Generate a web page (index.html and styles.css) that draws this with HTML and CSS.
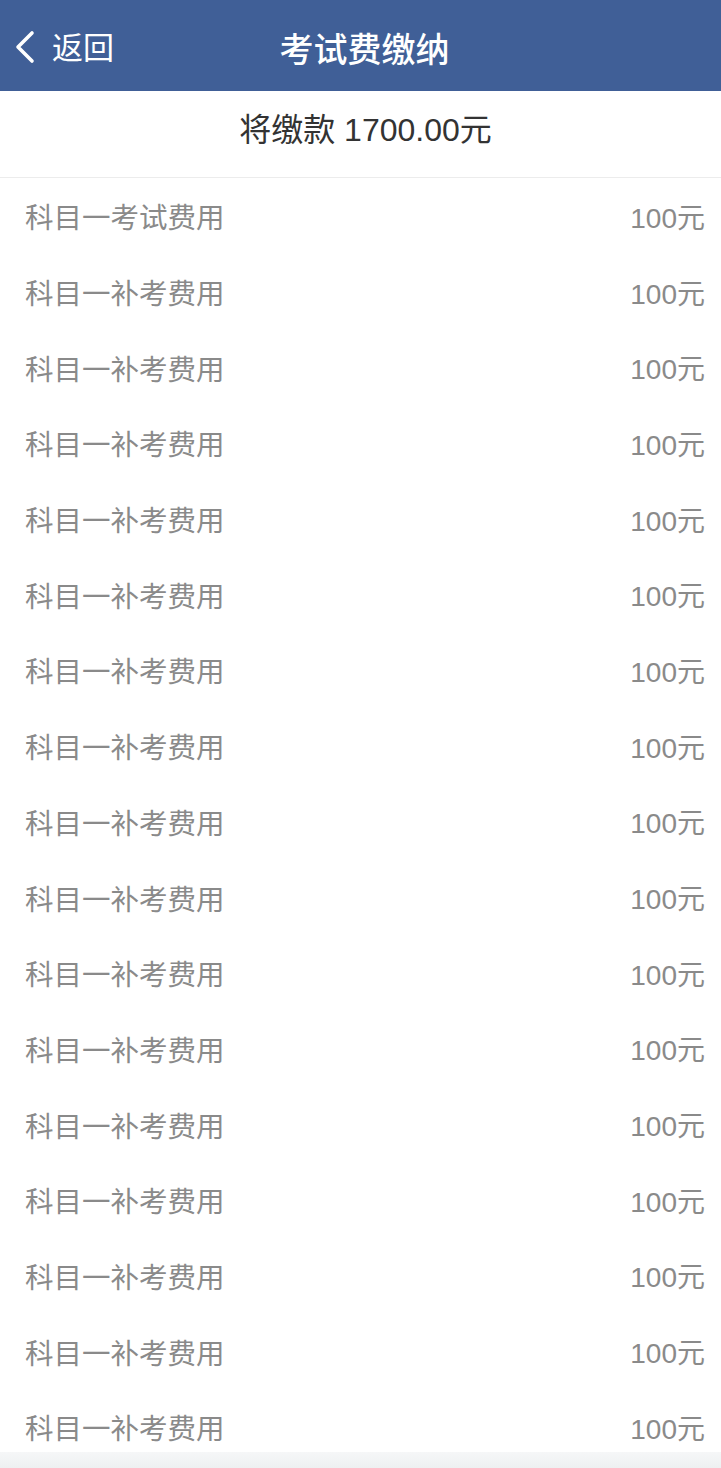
FILE: index.html
```html
<!DOCTYPE html>
<html lang="zh-CN">
<head>
    <meta charset="UTF-8">
    <meta name="viewport" content="width=device-width, initial-scale=1.0">
    <title>考试费缴纳</title>
    <link rel="stylesheet" href="styles.css">
</head>
<body>

    <!-- 顶部导航 -->
    <div class="navbar">
        <a class="back" href="#">
            <svg class="back-icon" viewBox="0 0 24 34" width="24" height="34">
                <path d="M20 3 L6 17 L20 31" fill="none" stroke="#fff" stroke-width="3.6" stroke-linecap="round" stroke-linejoin="round"/>
            </svg>
            <span>返回</span>
        </a>
        <div class="title">考试费缴纳</div>
    </div>

    <!-- 缴款总额 -->
    <div class="summary">将缴款 1700.00元</div>

    <!-- 费用明细 -->
    <ul class="fee-list">
        <li><span>科目一考试费用</span><span class="amount">100元</span></li>
        <li><span>科目一补考费用</span><span class="amount">100元</span></li>
        <li><span>科目一补考费用</span><span class="amount">100元</span></li>
        <li><span>科目一补考费用</span><span class="amount">100元</span></li>
        <li><span>科目一补考费用</span><span class="amount">100元</span></li>
        <li><span>科目一补考费用</span><span class="amount">100元</span></li>
        <li><span>科目一补考费用</span><span class="amount">100元</span></li>
        <li><span>科目一补考费用</span><span class="amount">100元</span></li>
        <li><span>科目一补考费用</span><span class="amount">100元</span></li>
        <li><span>科目一补考费用</span><span class="amount">100元</span></li>
        <li><span>科目一补考费用</span><span class="amount">100元</span></li>
        <li><span>科目一补考费用</span><span class="amount">100元</span></li>
        <li><span>科目一补考费用</span><span class="amount">100元</span></li>
        <li><span>科目一补考费用</span><span class="amount">100元</span></li>
        <li><span>科目一补考费用</span><span class="amount">100元</span></li>
        <li><span>科目一补考费用</span><span class="amount">100元</span></li>
        <li><span>科目一补考费用</span><span class="amount">100元</span></li>
    </ul>

    <!-- 底部栏 -->
    <div class="bottom-bar"></div>

</body>
</html>
```

FILE: styles.css
```css
body, html {
    margin: 0;
    padding: 0;
    font-family: "Noto Sans CJK SC", "Liberation Sans", sans-serif;
    background-color: #fff;
    color: #333;
    overflow: hidden;
}

/* 顶部导航 */
.navbar {
    height: 91px;
    background-color: #405f97;
    display: flex;
    align-items: center;
    justify-content: center;
    position: relative;
}

.back {
    position: absolute;
    left: 12px;
    top: 0;
    height: 91px;
    display: flex;
    align-items: center;
    color: #fff;
    text-decoration: none;
    font-size: 31px;
}

.back-icon {
    margin-right: 16px;
    margin-top: 2px;
}

.title {
    color: #fff;
    font-size: 34px;
    font-weight: 500;
    margin-left: 8px;
    padding-top: 4px;
}

/* 缴款总额 */
.summary {
    height: 87px;
    display: flex;
    align-items: center;
    justify-content: center;
    font-family: "Liberation Sans", "Noto Sans CJK SC", sans-serif;
    font-size: 32px;
    color: #333;
    border-bottom: 1px solid #ececec;
    padding: 0 0 14px 10px;
    box-sizing: border-box;
}

/* 费用明细 */
.fee-list {
    list-style: none;
    margin: 0;
    padding: 0;
}

.fee-list li {
    height: 75.7px;
    display: flex;
    align-items: center;
    justify-content: space-between;
    padding: 0 16px 0 25px;
    font-size: 28.5px;
    color: #8a8a8a;
}

.amount {
    font-family: "Liberation Sans", "Noto Sans CJK SC", sans-serif;
    font-size: 28px;
}

.bottom-bar {
    position: fixed;
    left: 0;
    right: 0;
    bottom: 0;
    height: 16px;
    background: linear-gradient(#f6f7f8, #eef0f1);
}
```
